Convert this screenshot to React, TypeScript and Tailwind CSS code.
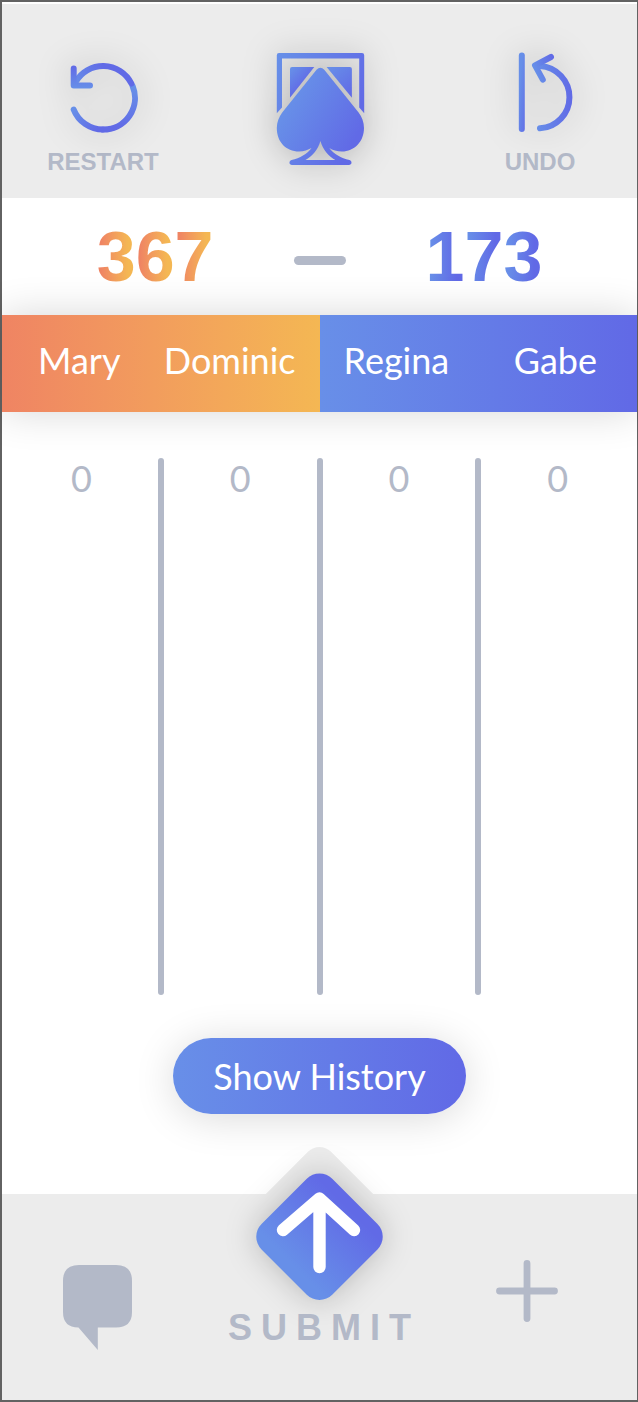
import React from "react";

const SHADOW = "drop-shadow-[0_0_17px_rgba(0,0,0,0.24)]";

function Blend({ id, x1, y1, x2, y2 }: { id: string; x1: number; y1: number; x2: number; y2: number }) {
  return (
    <linearGradient id={id} gradientUnits="userSpaceOnUse" x1={x1} y1={y1} x2={x2} y2={y2}>
      <stop offset="0" stopColor="#678fe8" />
      <stop offset="1" stopColor="#616ae6" />
    </linearGradient>
  );
}

function RestartIcon() {
  return (
    <svg viewBox="45 48 116 102" className={`h-[102px] w-[116px] overflow-visible ${SHADOW}`} fill="none" strokeWidth="6" strokeLinecap="round" strokeLinejoin="round" aria-hidden="true">
      <defs>
        <Blend id="restart-low" x1={120} y1={84} x2={108} y2={124} />
        <Blend id="restart-start" x1={74} y1={109} x2={98} y2={129} />
        <Blend id="restart-top" x1={76} y1={88} x2={106} y2={70} />
        <Blend id="restart-head" x1={76} y1={88} x2={76} y2={66} />
      </defs>
      <path d="M132.6 86 A31.6 31.6 0 0 1 103 129.6" stroke="url(#restart-low)" />
      <path d="M73.7 109.6 A31.6 31.6 0 0 0 103 129.6" stroke="url(#restart-start)" />
      <path d="M75.6 82 A31.6 31.6 0 0 1 131.4 83.5" stroke="url(#restart-top)" />
      <path d="M73.7 68.5 V85.5 H90" stroke="url(#restart-head)" />
    </svg>
  );
}

function SpadeLogo() {
  return (
    <svg viewBox="269 48 100 126" className={`h-[126px] w-[100px] overflow-visible ${SHADOW}`} role="img" aria-label="Spades">
      <defs>
        <Blend id="spade-frame" x1={276} y1={60} x2={363} y2={100} />
        <Blend id="spade-left" x1={289} y1={70} x2={304} y2={84} />
        <Blend id="spade-right" x1={328} y1={66} x2={352} y2={94} />
        <Blend id="spade-body" x1={290} y1={100} x2={355} y2={138} />
      </defs>
      <path fill="url(#spade-frame)" d="M275.8 113.2 V55.2 Q275.8 53 278 53 H361 Q363.2 53 363.2 55.2 V113.2 L358.2 107.6 V58.6 H281 V107.6 Z" />
      <path fill="url(#spade-left)" d="M289 97.8 V69 Q289 67 291 67 H313.3 Z" />
      <path fill="url(#spade-right)" d="M350.9 97.8 V69 Q350.9 67 348.9 67 H325.6 Z" />
      <path
        fill="url(#spade-body)"
        fillRule="evenodd"
        d="M315.5 69.8 Q319.4 65.6 323.3 69.8 L357.6 112.5 C361 117 363 122 363 128 C363 142 353 151.5 341 151.5 C336 151.5 331.5 150 328.3 148 C333 154 340 158 348.5 160 C351.5 161 351 165 348 165 H291 C288 165 287.5 161 290.5 160 C299 158 306 154 310.5 148 C307 150 303 151.3 298 151.5 C285 151.5 275.8 142 275.8 128 C275.8 122 278 117 281.2 112.5 Z M319.4 141 C317 150 311 156.5 304.5 160 H334.3 C327.7 156.5 322 150 319.4 141 Z"
      />
    </svg>
  );
}

function UndoIcon() {
  return (
    <svg viewBox="482 48 116 102" className={`h-[102px] w-[116px] overflow-visible ${SHADOW}`} fill="none" strokeWidth="6" strokeLinecap="round" strokeLinejoin="round" aria-hidden="true">
      <defs>
        <Blend id="undo-bar" x1={519} y1={92} x2={530} y2={93} />
        <Blend id="undo-arc" x1={536} y1={100} x2={572} y2={100} />
        <Blend id="undo-head" x1={534} y1={68} x2={554} y2={60} />
      </defs>
      <path d="M521.8 55.5 V129" stroke="url(#undo-bar)" />
      <path d="M540 128.3 A31.2 31.2 0 0 0 540 66" stroke="url(#undo-arc)" />
      <path d="M551 57 L535 65.4 L542.8 79.6" stroke="url(#undo-head)" />
    </svg>
  );
}

function SubmitIcon() {
  return (
    <svg viewBox="229 1146 182 164" className="h-[164px] w-[182px] overflow-visible" aria-hidden="true">
      <defs>
        <Blend id="submit-fill" x1={319.5} y1={1276} x2={319.5} y2={1196} />
      </defs>
      <rect x="269.5" y="1161" width="100" height="100" rx="16" fill="#ececec" transform="rotate(45 319.5 1211)" />
      <g className="drop-shadow-[0_0_16px_rgba(0,0,0,0.22)]">
        <rect x="269.5" y="1186.7" width="100" height="100" rx="18" fill="url(#submit-fill)" transform="rotate(45 319.5 1236.7)" />
      </g>
      <path d="M283 1230 L319.5 1198.5 L354 1230 M319.5 1199 V1267" fill="none" stroke="#fff" strokeWidth="12.4" strokeLinecap="round" strokeLinejoin="round" />
    </svg>
  );
}

function Score({ value, tone }: { value: string; tone: string }) {
  return (
    <div className="flex text-[70px] leading-none font-bold" aria-label={value}>
      {value.split("").map((digit, i) => (
        <span key={i} className={`bg-clip-text text-transparent ${tone}`}>
          {digit}
        </span>
      ))}
    </div>
  );
}

const TALLIES = ["0", "0", "0", "0"];

export default function App() {
  return (
    <div className="flex min-h-screen flex-col border-2 border-r border-[#626262] bg-white pt-0.5 font-['Liberation_Sans',Arial,sans-serif]">
      <header className="grid grid-cols-[1fr_auto_1fr] items-start bg-[#ececec] pt-11 pb-6">
        <button type="button" className="ml-[43px] flex w-[116px] flex-col items-center justify-self-start text-2xl leading-6 font-bold text-[#b3b9c8]">
          <RestartIcon />
          RESTART
        </button>
        <SpadeLogo />
        <button type="button" className="mr-[39px] flex w-[116px] flex-col items-center justify-self-end text-2xl leading-6 font-bold text-[#b3b9c8]">
          <UndoIcon />
          UNDO
        </button>
      </header>

      <section className="flex h-[117px] items-center justify-center gap-20">
        <Score value="367" tone="bg-linear-to-r from-[#ef8463] from-10% to-[#f4b753] to-80%" />
        <div className="mt-2 h-[9px] w-[52px] rounded-full bg-[#b3b9c8]" />
        <Score value="173" tone="bg-linear-to-r from-[#688fe8] from-10% to-[#6169e6] to-80%" />
      </section>

      <section className="grid grid-cols-2 font-['Lato',sans-serif] text-4xl text-white shadow-[0_0_40px_rgba(0,0,0,0.16)]">
        <div className="flex h-[97px] items-center justify-between bg-linear-to-r from-[#ef8463] to-[#f4b753] pr-6 pb-2 pl-9">
          <span>Mary</span>
          <span>Dominic</span>
        </div>
        <div className="flex h-[97px] items-center justify-between bg-linear-to-r from-[#688fe8] to-[#6169e6] pr-10 pb-2 pl-6">
          <span>Regina</span>
          <span>Gabe</span>
        </div>
      </section>

      <main className="flex flex-1 flex-col items-center font-['Lato',sans-serif] text-4xl">
        <div className="flex w-full flex-1 px-[3px] pt-[46px] pb-[43px] text-[#b3b9c8]">
          {TALLIES.map((tally, i) => (
            <React.Fragment key={i}>
              {i > 0 && <div className="w-1.5 rounded-full bg-[#b3b9c8]" />}
              <div className="flex-1 text-center">{tally}</div>
            </React.Fragment>
          ))}
        </div>
        <button type="button" className="mb-20 h-[76px] rounded-full bg-linear-to-r from-[#688fe8] to-[#6169e6] px-10 text-white shadow-[0_4px_40px_rgba(0,0,0,0.15)]">
          Show History
        </button>
      </main>

      <footer className="grid h-[206px] grid-cols-[1fr_auto_1fr] items-start bg-[#ececec]">
        <button type="button" aria-label="Chat" className="mt-[71px] ml-[61px] justify-self-start text-[#b3b9c8]">
          <svg viewBox="0 0 69 85" className="h-[85px] w-[69px]" fill="currentColor" aria-hidden="true">
            <path d="M16 0 H53 Q69 0 69 16 V47 Q69 62.5 53 62.5 H34.8 V85 L15.5 62.5 Q0 62.5 0 47 V16 Q0 0 16 0 Z" />
          </svg>
        </button>
        <button type="button" className="-mt-12 flex flex-col items-center text-4xl leading-9 font-bold text-[#b3b9c8]">
          <SubmitIcon />
          <span className="pl-[9px] tracking-[0.25em]">SUBMIT</span>
        </button>
        <button type="button" aria-label="Add" className="mt-[66px] mr-[79px] justify-self-end text-[#b3b9c8]">
          <svg viewBox="0 0 62 62" className="h-[62px] w-[62px]" fill="none" stroke="currentColor" strokeWidth="6.8" strokeLinecap="round" aria-hidden="true">
            <path d="M31 3.5 V58.5 M3.5 31 H58.5" />
          </svg>
        </button>
      </footer>
    </div>
  );
}
